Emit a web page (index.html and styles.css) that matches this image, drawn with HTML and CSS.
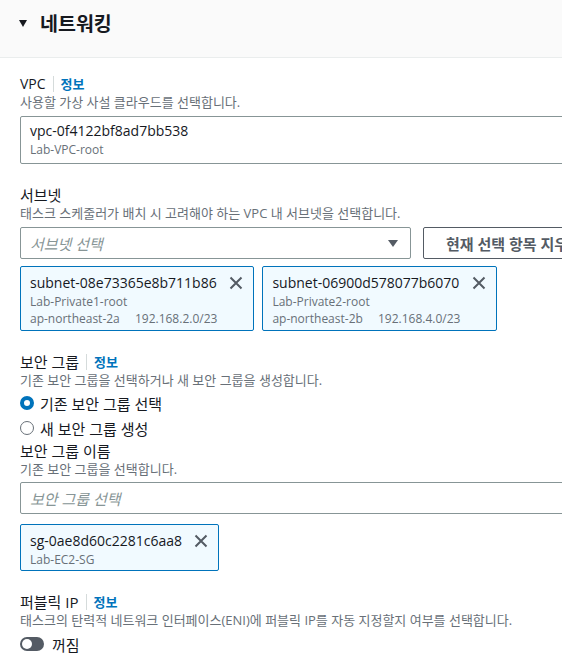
FILE: index.html
```html
<!DOCTYPE html>
<html lang="ko">
<head>
    <meta charset="UTF-8">
    <meta name="viewport" content="width=device-width, initial-scale=1.0">
    <title>네트워킹</title>
    <link rel="stylesheet" href="styles.css">
</head>
<body>
    <div class="panel">
        <div class="panel-header">
            <span class="caret"></span>
            <h2>네트워킹</h2>
        </div>

        <div class="panel-body">
            <!-- VPC -->
            <div class="field">
                <div class="label"><span class="latin">VPC</span><a class="info">정보</a></div>
                <div class="desc">사용할 가상 사설 클라우드를 선택합니다.</div>
                <div class="select-box value">
                    <div class="value-main">vpc-0f4122bf8ad7bb538</div>
                    <div class="value-sub">Lab-VPC-root</div>
                </div>
            </div>

            <!-- Subnets -->
            <div class="field">
                <div class="label">서브넷</div>
                <div class="desc">태스크 스케줄러가 배치 시 고려해야 하는 VPC 내 서브넷을 선택합니다.</div>
                <div class="select-row">
                    <div class="select-box placeholder narrow">
                        <span>서브넷 선택</span>
                        <svg class="select-caret" width="10" height="7" viewBox="0 0 10 7"><polygon points="0,0 10,0 5,7" fill="#545b64"/></svg>
                    </div>
                    <button class="btn">현재 선택 항목 지우기</button>
                </div>
                <div class="tokens">
                    <div class="token">
                        <div class="token-text">
                            <div class="value-main">subnet-08e73365e8b711b86</div>
                            <div class="value-sub">Lab-Private1-root</div>
                            <div class="value-sub">ap-northeast-2a <span class="tag">192.168.2.0/23</span></div>
                        </div>
                        <svg class="dismiss" width="14" height="14" viewBox="0 0 14 14"><path d="M1.5 1.5L12.5 12.5M12.5 1.5L1.5 12.5" stroke="#545b64" stroke-width="2" fill="none"/></svg>
                    </div>
                    <div class="token">
                        <div class="token-text">
                            <div class="value-main">subnet-06900d578077b6070</div>
                            <div class="value-sub">Lab-Private2-root</div>
                            <div class="value-sub">ap-northeast-2b <span class="tag">192.168.4.0/23</span></div>
                        </div>
                        <svg class="dismiss" width="14" height="14" viewBox="0 0 14 14"><path d="M1.5 1.5L12.5 12.5M12.5 1.5L1.5 12.5" stroke="#545b64" stroke-width="2" fill="none"/></svg>
                    </div>
                </div>
            </div>

            <!-- Security group -->
            <div class="field">
                <div class="label">보안 그룹<a class="info">정보</a></div>
                <div class="desc">기존 보안 그룹을 선택하거나 새 보안 그룹을 생성합니다.</div>
                <div class="radios">
                    <label class="radio"><span class="radio-dot checked"></span>기존 보안 그룹 선택</label>
                    <label class="radio"><span class="radio-dot"></span>새 보안 그룹 생성</label>
                </div>
                <div class="label sub">보안 그룹 이름</div>
                <div class="desc">기존 보안 그룹을 선택합니다.</div>
                <div class="select-box placeholder sg-select">
                    <span>보안 그룹 선택</span>
                </div>
                <div class="tokens sg-tokens">
                    <div class="token short">
                        <div class="token-text">
                            <div class="value-main">sg-0ae8d60c2281c6aa8</div>
                            <div class="value-sub">Lab-EC2-SG</div>
                        </div>
                        <svg class="dismiss" width="14" height="14" viewBox="0 0 14 14"><path d="M1.5 1.5L12.5 12.5M12.5 1.5L1.5 12.5" stroke="#545b64" stroke-width="2" fill="none"/></svg>
                    </div>
                </div>
            </div>

            <!-- Public IP -->
            <div class="field">
                <div class="label">퍼블릭 IP<a class="info">정보</a></div>
                <div class="desc">태스크의 탄력적 네트워크 인터페이스(ENI)에 퍼블릭 IP를 자동 지정할지 여부를 선택합니다.</div>
                <div class="toggle-row">
                    <span class="toggle"><span class="knob"></span></span>
                    <span>꺼짐</span>
                </div>
            </div>
        </div>
    </div>
</body>
</html>
```

FILE: styles.css
```css
html, body {
    overflow: hidden;
}
body {
    margin: 0;
    font-family: "Open Sans", "Noto Sans CJK KR", sans-serif;
    font-size: 14px;
    color: #16191f;
    background-color: #fff;
}
.panel {
    width: 800px;
}
.panel-header {
    display: flex;
    align-items: center;
    height: 57px;
    padding: 0 19px;
    background-color: #fafafa;
    border-bottom: 1px solid #eaeded;
}
.panel-header h2 {
    margin: 0 0 10px 13px;
    font-size: 19.5px;
    font-weight: 700;
    line-height: 24px;
}
.caret {
    width: 0;
    height: 0;
    margin-bottom: 10px;
    border-left: 4px solid transparent;
    border-right: 4px solid transparent;
    border-top: 7px solid #16191f;
}
.panel-body {
    padding: 15px 20px 20px;
}
.field + .field {
    margin-top: 20px;
}
.label {
    display: flex;
    align-items: center;
    padding-top: 1px;
    font-size: 15px;
    line-height: 20px;
}
.label.sub {
    padding-top: 0;
}
.latin {
    font-size: 14px;
}
.info {
    margin-left: 7px;
    padding-left: 7px;
    border-left: 1px solid #d5dbdb;
    color: #0073bb;
    font-size: 13px;
    font-weight: 700;
    line-height: 16px;
}
.desc {
    color: #687078;
    font-size: 13px;
    line-height: 16px;
}
.select-box {
    margin-top: 6px;
    border: 1px solid #879596;
    border-radius: 2px;
    padding: 0 9px;
    box-sizing: border-box;
}
.select-box.value {
    padding-top: 4px;
    padding-bottom: 4px;
}
.value-main {
    line-height: 20px;
}
.value-sub {
    color: #687078;
    font-size: 12px;
    line-height: 18px;
}
.placeholder {
    display: flex;
    align-items: center;
    justify-content: space-between;
    height: 32px;
    color: #879596;
    font-size: 15px;
    font-style: italic;
}
.select-row {
    display: flex;
    gap: 12px;
    margin-top: 6px;
}
.select-row .select-box {
    margin-top: 0;
}
.narrow {
    width: 391px;
    padding-right: 12px;
}
.btn {
    height: 32px;
    padding: 0 20px 0 22px;
    border: 1px solid #545b64;
    border-radius: 2px;
    background-color: #fff;
    color: #545b64;
    font-family: inherit;
    font-size: 15px;
    font-weight: 700;
    white-space: nowrap;
}
.tokens {
    display: flex;
    gap: 8px;
    margin-top: 7px;
}
.sg-select {
    margin-top: 5px;
}
.sg-tokens {
    margin-top: 10px;
}
.token {
    display: flex;
    align-items: flex-start;
    gap: 12px;
    padding: 6px 10px 3px 9px;
    border: 1px solid #0073bb;
    border-radius: 2px;
    background-color: #f1faff;
}
.token.short {
    padding-bottom: 2px;
}
.token .value-sub {
    line-height: 17px;
}
.tag {
    margin-left: 12px;
}
.dismiss {
    margin-top: 3px;
}
.radios {
    margin-top: 3px;
}
.radio {
    display: flex;
    align-items: center;
    height: 24px;
    margin-bottom: 1px;
    font-size: 15px;
}
.radio-dot {
    width: 14px;
    height: 14px;
    margin-right: 6px;
    border: 1.5px solid #687078;
    border-radius: 50%;
    box-sizing: border-box;
    background-color: #fff;
}
.radio-dot.checked {
    border: 4px solid #0073bb;
}
.toggle-row {
    display: flex;
    align-items: center;
    gap: 8px;
    height: 22px;
    margin-top: 5px;
    font-size: 15px;
}
.toggle {
    display: flex;
    align-items: center;
    width: 24px;
    height: 14px;
    padding: 0 2px;
    border-radius: 7px;
    background-color: #545b64;
    box-sizing: border-box;
}
.knob {
    width: 10px;
    height: 10px;
    border-radius: 50%;
    background-color: #fff;
}
```
